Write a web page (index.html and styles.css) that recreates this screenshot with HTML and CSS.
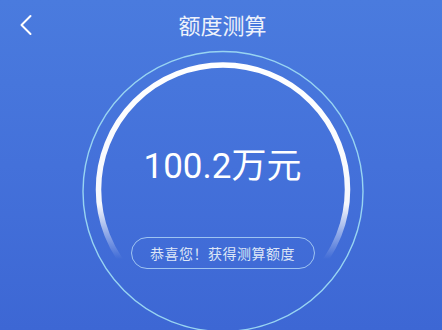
FILE: index.html
```html
<!DOCTYPE html>
<html lang="zh">
<head>
<meta charset="utf-8">
<link rel="stylesheet" href="styles.css">
</head>
<body>
<div class="page">
  <header class="topbar">
    <div class="back">
      <svg width="14" height="22" viewBox="0 0 14 22">
        <polyline points="11.5,2 2.5,11 11.5,20" fill="none" stroke="#ffffff" stroke-width="2" stroke-linecap="round" stroke-linejoin="round"/>
      </svg>
    </div>
    <h1 class="title">额度测算</h1>
    <div></div>
  </header>
  <main class="dial">
    <svg class="rings" width="284" height="284" viewBox="0 0 284 284">
      <defs>
        <linearGradient id="fade" gradientUnits="userSpaceOnUse" x1="0" y1="15" x2="0" y2="210">
          <stop offset="0" stop-color="#ffffff" stop-opacity="1"/>
          <stop offset="0.72" stop-color="#ffffff" stop-opacity="0.95"/>
          <stop offset="0.86" stop-color="#ffffff" stop-opacity="0.45"/>
          <stop offset="1" stop-color="#ffffff" stop-opacity="0"/>
        </linearGradient>
      </defs>
      <circle cx="142" cy="142.5" r="140" fill="none" stroke="#98d4f2" stroke-width="1.4"/>
      <circle cx="142" cy="140.5" r="124.5" fill="none" stroke="url(#fade)" stroke-width="5.5"/>
    </svg>
    <div class="amount">100.2万元</div>
    <div class="pill">恭喜您！获得测算额度</div>
  </main>
</div>
</body>
</html>
```

FILE: styles.css
```css
html, body {
  margin: 0;
  padding: 0;
}
body {
  width: 442px;
  height: 330px;
  overflow: hidden;
  background: linear-gradient(180deg, #4a7bde 0%, #4471da 50%, #3d67d4 100%);
  font-family: Roboto, "Noto Sans CJK SC", sans-serif;
  color: #ffffff;
}
.page {
  padding-left: 3px;
}
.topbar {
  height: 50px;
  box-sizing: border-box;
  padding-bottom: 3px;
  display: grid;
  grid-template-columns: 1fr auto 1fr;
  align-items: center;
}
.back {
  padding-left: 16px;
  padding-top: 3px;
  display: flex;
  align-items: center;
}
.back svg {
  display: block;
}
.title {
  margin: 0;
  font-size: 22px;
  font-weight: 400;
  line-height: 30px;
  color: #eef2fb;
  font-family: "Noto Sans CJK SC", sans-serif;
}
.dial {
  position: relative;
  width: 284px;
  height: 280px;
  margin: 0 auto;
  display: flex;
  flex-direction: column;
  align-items: center;
}
.rings {
  position: absolute;
  left: 0;
  top: -1px;
}
.amount {
  position: relative;
  margin-top: 97px;
  font-size: 35px;
  line-height: 40px;
  font-weight: 400;
  color: #ffffff;
}
.pill {
  position: relative;
  margin-top: 50px;
  box-sizing: border-box;
  width: 184px;
  height: 32px;
  border: 1px solid rgba(190, 225, 250, 0.75);
  border-radius: 16px;
  display: flex;
  align-items: center;
  justify-content: center;
  font-family: "Noto Sans CJK SC", sans-serif;
  font-size: 14px;
  letter-spacing: 0.5px;
  color: #dde6f6;
}
```
